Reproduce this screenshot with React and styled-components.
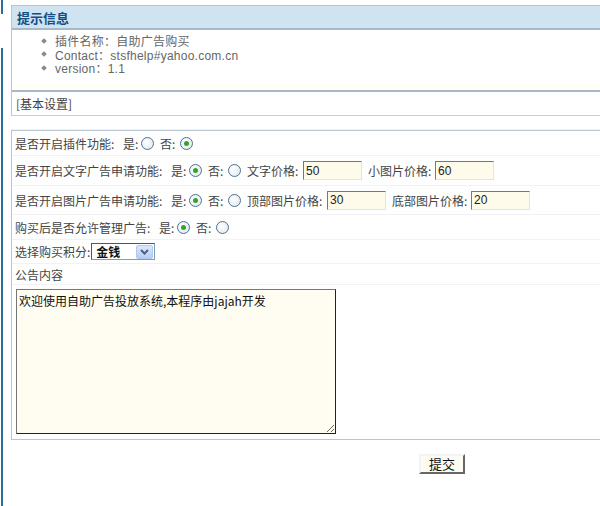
import React from "react";
import styled, { createGlobalStyle } from "styled-components";

const GlobalStyle = createGlobalStyle`
  html, body {
    margin: 0;
    padding: 0;
    background: #fff;
    overflow: hidden;
  }
  body {
    font-family: "Liberation Sans", "Noto Sans CJK SC", sans-serif;
    font-size: 12px;
    color: #333;
  }
`;

const Page = styled.div`
  display: flex;
  width: 600px;
  height: 506px;
  overflow: hidden;
`;

const Rail = styled.div`
  width: 11px;
  flex-shrink: 0;
  display: flex;
  flex-direction: column;
`;

const RailLine = styled.div`
  margin-left: 1px;
  width: 2px;
  background: #2a6e99;
  height: ${(p) => (p.$grow ? "auto" : p.$h + "px")};
  flex: ${(p) => (p.$grow ? 1 : "none")};
  margin-top: ${(p) => p.$top || 0}px;
`;

const Main = styled.div`
  width: 720px;
  flex-shrink: 0;
  padding-top: 5px;
`;

const Panel = styled.div`
  border: 1px solid #b6c6d4;
  border-right: none;
  border-bottom-color: #c6cfd8;
`;

const PanelHead = styled.div`
  height: 22px;
  background: #cfe3f0;
  border-bottom: 2px solid #a7b8c6;
  display: flex;
  align-items: center;
  padding-left: 5px;
  font-family: "Noto Sans CJK SC", sans-serif;
  font-weight: bold;
  font-size: 13px;
  color: #124f86;
`;

const InfoList = styled.ul`
  margin: 0;
  padding: 4px 0 0 30px;
  height: 60px;
  box-sizing: border-box;
  list-style: none;
  background: linear-gradient(#fff 88%, #fffdf2);
`;

const InfoItem = styled.li`
  display: flex;
  align-items: center;
  height: 13.5px;
  color: #666;
  font-family: "Liberation Sans", "Noto Sans CJK SC", sans-serif;
  font-size: 12px;
  letter-spacing: 0.25px;
  &::before {
    content: "";
    width: 4px;
    height: 4px;
    background: #8a8a8a;
    transform: rotate(45deg);
    margin-right: 9px;
  }
`;

const SectionTitle = styled.div`
  border-top: 2px solid #aab8c5;
  height: 23px;
  display: flex;
  align-items: center;
  padding-left: 4px;
  font-family: "Noto Sans CJK SC", sans-serif;
  color: #444;
`;

const Spacer = styled.div`
  height: 13px;
  border-bottom: 1px solid #eef1f4;
`;

const FormPanel = styled.div`
  border: 1px solid #b6c6d4;
  border-right: none;
  border-top-color: #bcc9d6;
  padding-bottom: 5px;
`;

const Row = styled.div`
  box-sizing: border-box;
  height: ${(p) => p.$h}px;
  display: flex;
  align-items: center;
  padding-left: 3px;
  border-bottom: 1px solid #f0f2f5;
  font-family: "Noto Sans CJK SC", sans-serif;
  color: #444;
  white-space: nowrap;
`;

const Label = styled.span`
  display: inline-flex;
  margin-right: ${(p) => (p.$mr === undefined ? 2 : p.$mr)}px;
`;

const Colon = styled.span`
  display: inline-block;
  width: ${(p) => p.$w || 6}px;
`;

const Radio = styled.span`
  box-sizing: border-box;
  width: 13px;
  height: 13px;
  border: 1px solid #4d7295;
  border-radius: 50%;
  background: radial-gradient(circle at 40% 40%, #fff, #dfe4ea);
  display: inline-flex;
  align-items: center;
  justify-content: center;
  margin-right: 6px;
  &::after {
    content: "";
    width: 5px;
    height: 5px;
    border-radius: 50%;
    background: ${(p) => (p.$on ? "#2fa52f" : "transparent")};
  }
`;

const TextInput = styled.input`
  box-sizing: border-box;
  width: 59px;
  height: 19px;
  padding: 1px 2px;
  border: 1px solid #999;
  border-top-color: #777;
  border-left-color: #777;
  border-bottom-color: #e4e4e4;
  border-right-color: #e4e4e4;
  background: #fffbea;
  font-family: "Liberation Sans", sans-serif;
  font-size: 12px;
  color: #222;
  margin-right: 6px;
  outline: none;
`;

const Select = styled.div`
  display: flex;
  align-items: center;
  box-sizing: border-box;
  width: 64px;
  height: 17px;
  border: 1px solid #7f9db9;
  border-top-color: #555;
  border-left-color: #555;
  background: #fff;
  margin-left: 1px;
`;

const SelectText = styled.span`
  flex: 1;
  padding-left: 4px;
  font-weight: bold;
  color: #111;
`;

const SelectArrow = styled.span`
  box-sizing: border-box;
  width: 17px;
  height: 14px;
  margin-right: 1px;
  background: linear-gradient(#dce8fb, #b7cdf3);
  border: 1px solid #b1c8ef;
  border-radius: 2px;
  display: flex;
  align-items: center;
  justify-content: center;
`;

const TextArea = styled.textarea`
  display: block;
  margin: 4px 0 0 4px;
  width: 320px;
  height: 145px;
  box-sizing: border-box;
  padding: 2px 2px;
  border: 1px solid #222;
  border-top-color: #777;
  border-left-color: #777;
  background: #fffdf1;
  font-family: "Noto Sans CJK SC", sans-serif;
  font-size: 12px;
  color: #111;
  outline: none;
`;

const Actions = styled.div`
  padding: 14px 0 0 408px;
`;

const Submit = styled.button`
  width: 46px;
  height: 20px;
  padding: 0;
  background: #fdfbf2;
  border: 2px solid;
  border-color: #f4f4f4 #666 #666 #f4f4f4;
  font-family: "Noto Sans CJK SC", sans-serif;
  font-size: 13px;
  color: #111;
  line-height: 14px;
`;

const Field = ({ children, mr }) => (
  <Label $mr={mr}>
    {children}
    <Colon>:</Colon>
  </Label>
);

const YesNo = ({ yes }) => (
  <>
    <Field mr={0}>是</Field>
    <Radio $on={yes} />
    <Field mr={2}>否</Field>
    <Radio $on={!yes} />
  </>
);

export default function App() {
  return (
    <Page>
      <GlobalStyle />
      <Rail>
        <RailLine $h={14} />
        <RailLine $grow $top={34} />
      </Rail>
      <Main>
        <Panel>
          <PanelHead>提示信息</PanelHead>
          <InfoList>
            <InfoItem>插件名称：自助广告购买</InfoItem>
            <InfoItem>Contact：stsfhelp#yahoo.com.cn</InfoItem>
            <InfoItem>version：1.1</InfoItem>
          </InfoList>
          <SectionTitle>[基本设置]</SectionTitle>
        </Panel>
        <Spacer />
        <FormPanel>
          <Row $h={25}>
            <Field mr={6}>是否开启插件功能</Field>
            <YesNo yes={false} />
          </Row>
          <Row $h={30}>
            <Field mr={6}>是否开启文字广告申请功能</Field>
            <YesNo yes />
            <Field>文字价格</Field>
            <TextInput defaultValue="50" />
            <Field mr={1}>小图片价格</Field>
            <TextInput defaultValue="60" />
          </Row>
          <Row $h={29}>
            <Field mr={6}>是否开启图片广告申请功能</Field>
            <YesNo yes />
            <Field>顶部图片价格</Field>
            <TextInput defaultValue="30" />
            <Field mr={1}>底部图片价格</Field>
            <TextInput defaultValue="20" />
          </Row>
          <Row $h={25}>
            <Field mr={6}>购买后是否允许管理广告</Field>
            <YesNo yes />
          </Row>
          <Row $h={24}>
            <Label $mr={0}>选择购买积分:</Label>
            <Select>
              <SelectText>金钱</SelectText>
              <SelectArrow>
                <svg width="9" height="6" viewBox="0 0 9 6">
                  <path d="M1 1 L4.5 4.5 L8 1" fill="none" stroke="#4d6185" strokeWidth="2" />
                </svg>
              </SelectArrow>
            </Select>
          </Row>
          <Row $h={21}>
            <Label>公告内容</Label>
          </Row>
          <TextArea defaultValue="欢迎使用自助广告投放系统,本程序由jajah开发" />
        </FormPanel>
        <Actions>
          <Submit>提交</Submit>
        </Actions>
      </Main>
    </Page>
  );
}
